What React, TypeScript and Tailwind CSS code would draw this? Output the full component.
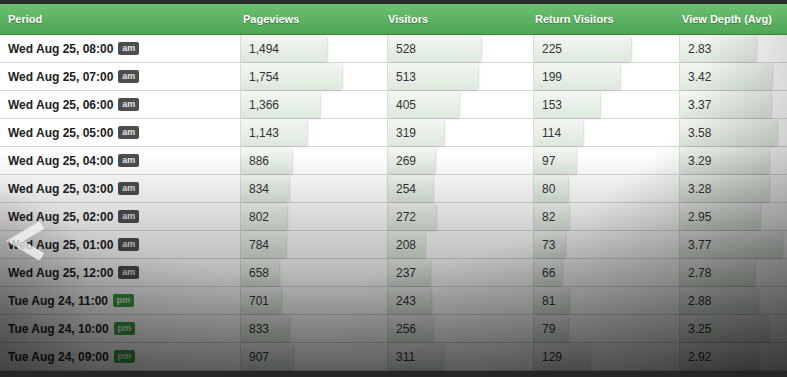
import React from "react";

type Row = { period: string; ampm: "am" | "pm"; pv: number; v: number; rv: number; vd: number };

const rows: Row[] = [
  { period: "Wed Aug 25, 08:00", ampm: "am", pv: 1494, v: 528, rv: 225, vd: 2.83 },
  { period: "Wed Aug 25, 07:00", ampm: "am", pv: 1754, v: 513, rv: 199, vd: 3.42 },
  { period: "Wed Aug 25, 06:00", ampm: "am", pv: 1366, v: 405, rv: 153, vd: 3.37 },
  { period: "Wed Aug 25, 05:00", ampm: "am", pv: 1143, v: 319, rv: 114, vd: 3.58 },
  { period: "Wed Aug 25, 04:00", ampm: "am", pv: 886, v: 269, rv: 97, vd: 3.29 },
  { period: "Wed Aug 25, 03:00", ampm: "am", pv: 834, v: 254, rv: 80, vd: 3.28 },
  { period: "Wed Aug 25, 02:00", ampm: "am", pv: 802, v: 272, rv: 82, vd: 2.95 },
  { period: "Wed Aug 25, 01:00", ampm: "am", pv: 784, v: 208, rv: 73, vd: 3.77 },
  { period: "Wed Aug 25, 12:00", ampm: "am", pv: 658, v: 237, rv: 66, vd: 2.78 },
  { period: "Tue Aug 24, 11:00", ampm: "pm", pv: 701, v: 243, rv: 81, vd: 2.88 },
  { period: "Tue Aug 24, 10:00", ampm: "pm", pv: 833, v: 256, rv: 79, vd: 3.25 },
  { period: "Tue Aug 24, 09:00", ampm: "pm", pv: 907, v: 311, rv: 129, vd: 2.92 },
];

function BarCell({ text, width, last }: { text: string; width: number; last?: boolean }) {
  return (
    <div className={"relative h-full " + (last ? "" : "border-r border-[#dcdcdc]")}>
      <div
        className="absolute left-0 top-0 bottom-0 rounded-r-[3px] bg-gradient-to-b from-[#f3f7f2] to-[#dde8dc] shadow-[1px_1px_2px_rgba(0,0,0,0.15)]"
        style={{ width }}
      />
      <div className="relative flex h-full items-center pl-[8px] text-[12px] text-[#333]">{text}</div>
    </div>
  );
}

export default function App() {
  return (
    <div
      className="relative h-[377px] w-[787px] overflow-hidden bg-[#2a2a2a]"
      style={{ fontFamily: '"Liberation Sans", Arial, sans-serif' }}
    >
      <div className="h-[4px] bg-[#2b2b2b]" />
      <div className="grid h-[31px] grid-cols-[241px_147px_146px_146px_1fr] items-center border-b border-[#3d7f41] bg-gradient-to-b from-[#6cc071] to-[#4ea655] text-[11px] font-bold text-white [text-shadow:0_1px_1px_rgba(0,0,0,0.35)]">
        <div className="pl-[8px]">Period</div>
        <div className="pl-[2px]">Pageviews</div>
        <div className="pl-[0px]">Visitors</div>
        <div className="pl-[1px]">Return Visitors</div>
        <div className="pl-[2px]">View Depth (Avg)</div>
      </div>
      <div className="bg-white">
        {rows.map((r) => (
          <div
            key={r.period}
            className="grid h-[28px] grid-cols-[241px_147px_146px_146px_1fr] border-b border-[#d8d8d8]"
          >
            <div className="flex h-full items-center border-r border-[#dcdcdc] pl-[8px] text-[12px] font-bold text-[#222]">
              <span>{r.period}</span>
              <span
                className={
                  "ml-[5px] flex h-[13px] w-[21px] items-center justify-center rounded-[2px] text-[9px] font-bold leading-none " +
                  (r.ampm === "am" ? "bg-[#4d4d4d] text-[#e6e6e6]" : "bg-[#3c9a42] text-[#d8f0d8]")
                }
              >
                {r.ampm}
              </span>
            </div>
            <BarCell text={r.pv.toLocaleString("en-US")} width={Math.round(r.pv * 0.0577)} />
            <BarCell text={String(r.v)} width={Math.round(r.v * 0.176)} />
            <BarCell text={String(r.rv)} width={Math.round(r.rv * 0.431)} />
            <BarCell text={r.vd.toFixed(2)} width={Math.round(r.vd * 27)} last />
          </div>
        ))}
      </div>
      <div className="h-[6px] bg-[#262626]" />

      {/* vignette overlay */}
      <div className="pointer-events-none absolute inset-x-0 top-[35px] bottom-[6px] bg-[radial-gradient(ellipse_90%_130%_at_40%_0%,rgba(0,0,0,0)_55%,rgba(0,0,0,0.65)_110%)]" />
      <div className="pointer-events-none absolute inset-x-0 top-[35px] bottom-[6px] bg-[linear-gradient(to_bottom,rgba(0,0,0,0)_35%,rgba(0,0,0,0.5)_100%)]" />
      <div className="pointer-events-none absolute inset-x-0 top-[35px] bottom-[6px] bg-[radial-gradient(ellipse_12%_45%_at_0%_85%,rgba(0,0,0,0.18)_0%,rgba(0,0,0,0)_100%)]" />

      {/* left chevron */}
      <svg className="pointer-events-none absolute left-[6px] top-[222px]" width="40" height="38" viewBox="0 0 40 38">
        <polyline points="36,3 9,19 36,35" fill="none" stroke="rgba(255,255,255,0.7)" strokeWidth="9" strokeLinejoin="miter" />
      </svg>
    </div>
  );
}
